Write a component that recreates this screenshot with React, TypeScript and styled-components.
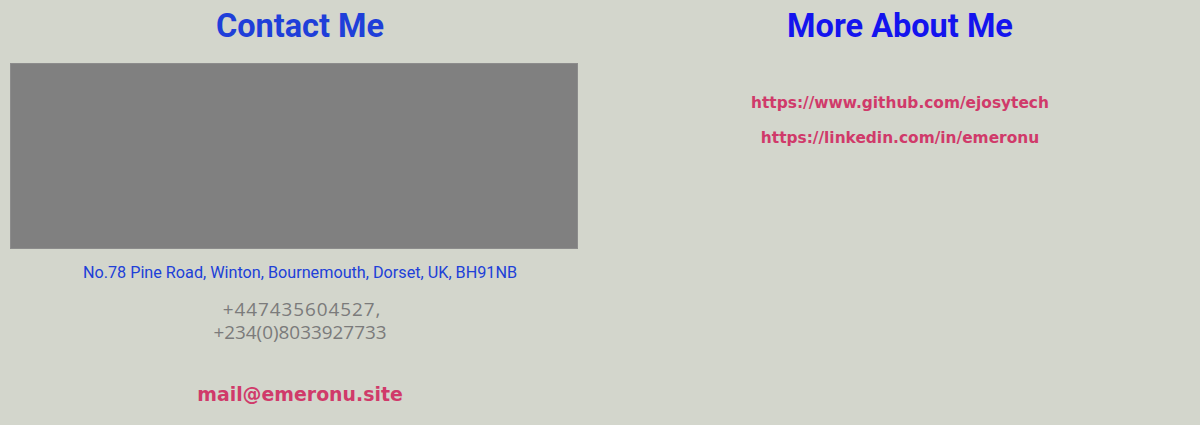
import React from "react";
import styled, { createGlobalStyle } from "styled-components";

const Global = createGlobalStyle`
  html, body { margin: 0; padding: 0; background: #d3d6cc; }
  body { font-family: Roboto, "Liberation Sans", sans-serif; }
`;

const Page = styled.div`
  display: grid;
  grid-template-columns: 600px 600px;
  width: 1200px;
  height: 425px;
  background: #d3d6cc;
`;

const Column = styled.section`
  display: flex;
  flex-direction: column;
  align-items: center;
`;

const Heading = styled.h2<{ $color: string }>`
  margin: 7px 0 0;
  font-family: Roboto, sans-serif;
  font-weight: 700;
  font-size: 32.5px;
  line-height: 38px;
  color: ${(p) => p.$color};
`;

const MapBox = styled.div`
  align-self: flex-start;
  margin: 18px 0 0 10px;
  width: 568px;
  height: 186px;
  background: #808080;
  box-sizing: border-box;
  border: 1px solid #8c8c8c;
`;

const Address = styled.p`
  margin: 14px 0 0;
  font-family: Roboto, sans-serif;
  font-size: 16.2px;
  line-height: 19px;
  color: #2040d8;
`;

const Phone = styled.p`
  margin: 16px 0 0;
  display: flex;
  flex-direction: column;
  align-items: center;
  color: #7b7b7b;
`;

const PhoneLine = styled.span<{ $wide?: boolean }>`
  font-family: "Open Sans", sans-serif;
  font-size: 18.9px;
  line-height: 23px;
  letter-spacing: ${(p) => (p.$wide ? "0.95px" : "0")};
  padding-left: ${(p) => (p.$wide ? "4px" : "0")};
`;

const Mail = styled.a`
  margin-top: 39px;
  font-family: "DejaVu Sans", Verdana, sans-serif;
  font-weight: 700;
  font-size: 18.9px;
  line-height: 22px;
  color: #d03a6a;
  text-decoration: none;
`;

const Links = styled.div`
  margin-top: 49px;
  display: flex;
  flex-direction: column;
  align-items: center;
  gap: 16px;
`;

const Link = styled.a`
  font-family: "DejaVu Sans", Verdana, sans-serif;
  font-weight: 700;
  font-size: 15.4px;
  line-height: 19px;
  color: #d03a6a;
  text-decoration: none;
`;

export default function App() {
  return (
    <>
      <Global />
      <Page>
        <Column>
          <Heading $color="#1f3fd9">Contact Me</Heading>
          <MapBox />
          <Address>No.78 Pine Road, Winton, Bournemouth, Dorset, UK, BH91NB</Address>
          <Phone>
            <PhoneLine $wide>+447435604527,</PhoneLine>
            <PhoneLine>+234(0)8033927733</PhoneLine>
          </Phone>
          <Mail href="#">mail@emeronu.site</Mail>
        </Column>
        <Column>
          <Heading $color="#1414ee">More About Me</Heading>
          <Links>
            <Link href="#">https://www.github.com/ejosytech</Link>
            <Link href="#">https://linkedin.com/in/emeronu</Link>
          </Links>
        </Column>
      </Page>
    </>
  );
}
